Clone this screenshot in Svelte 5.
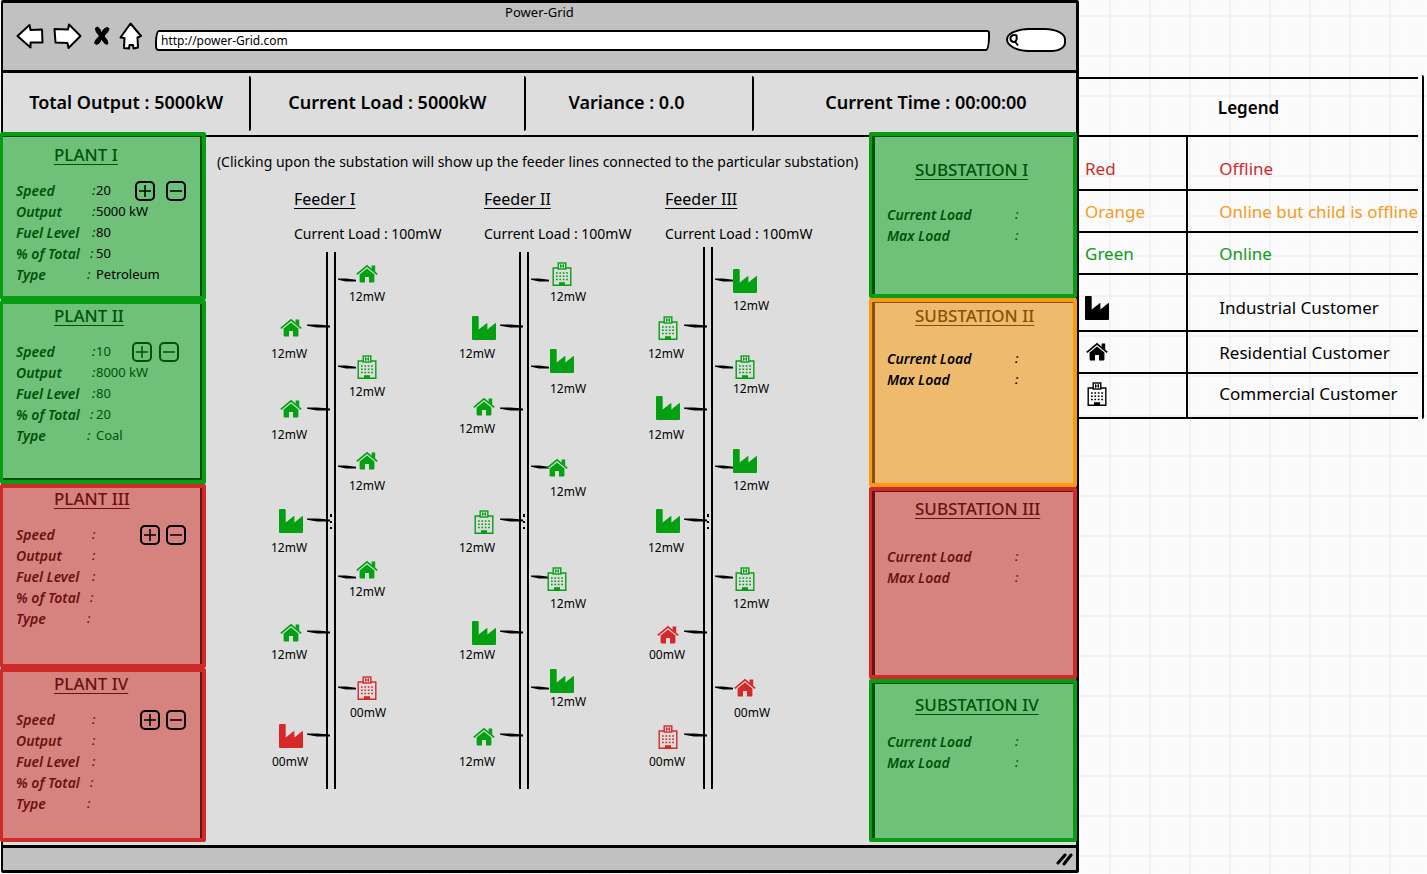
<script>
  const rows = ['Speed', 'Output', 'Fuel Level', '% of Total', 'Type'];

  const plants = [
    { numeral: 'I', state: 'online', cls: 'p1', values: ['20', '5000 kW', '80', '50', 'Petroleum'] },
    { numeral: 'II', state: 'online', cls: 'p2', values: ['10', '8000 kW', '80', '20', 'Coal'] },
    { numeral: 'III', state: 'offline', cls: 'p3', values: ['', '', '', '', ''] },
    { numeral: 'IV', state: 'offline', cls: 'p4', values: ['', '', '', '', ''] }
  ];

  const substations = [
    { numeral: 'I', state: 'online', cls: 's1' },
    { numeral: 'II', state: 'partial', cls: 's2' },
    { numeral: 'III', state: 'offline', cls: 's3' },
    { numeral: 'IV', state: 'online', cls: 's4' }
  ];

  // Node: [kind, icon x, icon y, label x, label y, offline]
  const feeders = [
    {
      numeral: 'I', rail: 64, top: 12,
      nodes: [
        ['home', 103, 34, 103, 56], ['home', 27, 88, 25, 113],
        ['office', 103, 127, 103, 151], ['home', 27, 169, 25, 194],
        ['home', 103, 221, 103, 245], ['plant', 27, 281, 25, 307],
        ['home', 103, 330, 103, 351], ['home', 27, 393, 25, 414],
        ['office', 103, 448, 104, 472, true], ['plant', 27, 496, 26, 521, true]
      ]
    },
    {
      numeral: 'II', rail: 67, top: 12,
      nodes: [
        ['office', 108, 34, 114, 56], ['plant', 30, 88, 23, 113],
        ['plant', 108, 121, 114, 148], ['home', 30, 167, 23, 188],
        ['home', 103, 228, 114, 251], ['office', 30, 282, 23, 307],
        ['office', 103, 339, 114, 363], ['plant', 30, 393, 23, 414],
        ['plant', 108, 441, 114, 461], ['home', 30, 497, 23, 521]
      ]
    },
    {
      numeral: 'III', rail: 70, top: 7,
      nodes: [
        ['plant', 110, 41, 116, 65], ['office', 33, 88, 31, 113],
        ['office', 110, 127, 116, 148], ['plant', 33, 168, 31, 194],
        ['plant', 110, 221, 116, 245], ['plant', 33, 281, 31, 307],
        ['office', 110, 339, 116, 363], ['home', 33, 395, 32, 414, true],
        ['home', 110, 448, 117, 472, true], ['office', 33, 497, 32, 521, true]
      ]
    }
  ];

  const rightTicks = [40, 127, 227, 337, 448];
  const leftTicks = [86, 169, 280, 392, 495];
</script>

{#snippet icon(kind)}
  <svg class="icon" viewBox="0 0 24 24" aria-hidden="true">
    {#if kind === 'plant'}
      <path fill="currentColor" d="M0 1Q0 0 1 0H5.7Q6.7 0 6.7 1V13.4L14.6 7.2Q15.4 6.8 15.4 7.6V13.4L23.1 7.2Q24 6.8 24 7.8V23Q24 24 23 24H1Q0 24 0 23Z" />
    {:else if kind === 'home'}
      <path fill="none" stroke="currentColor" stroke-width="1.8" d="M1.8 12.4L12 3.9L22.2 12.4" />
      <path fill="currentColor" d="M16.6 3.6H20.2V10L16.6 7Z" />
      <path fill="currentColor" d="M4.6 12.6L12 6.4L19.4 12.6V19.6Q19.4 20.6 18.4 20.6H14V15H10V20.6H5.6Q4.6 20.6 4.6 19.6Z" />
    {:else}
      <g fill="none" stroke="currentColor" stroke-width="1.4">
        <path d="M8 6H3.2V23.2H20.8V6H16" />
        <rect x="8.2" y="1" width="7.6" height="6" />
        <path d="M10.6 2.2V5.8M13.4 2.2V5.8M10.6 4H13.4" stroke-width="1.2" />
        <path d="M6 11H18M6 14.3H18M6 17.6H18" stroke-width="1.5" stroke-dasharray="1.7 1.7" />
      </g>
      <path fill="currentColor" d="M9 23.2V20.2H15V23.2Z" />
    {/if}
  </svg>
{/snippet}

<div class="page">
  <main class="window">
    <header class="chrome">
      <div class="caption">Power-Grid</div>
      <div class="toolbar">
        <button aria-label="Back">
          <svg width="28" height="26" viewBox="0 0 28 26"><path d="M1.5 13L13.5 2L14.5 7L26 6.5L26.5 19.5L14.5 19.5L14.5 24.5Z" /></svg>
        </button>
        <button aria-label="Forward">
          <svg width="30" height="28" viewBox="0 0 30 28"><path d="M28.5 14L17 2.5L16 7.5L2.5 7L3.5 20.5L15.5 21L16.5 26Z" /></svg>
        </button>
        <button aria-label="Stop" class="stop">
          <svg width="18" height="22" viewBox="0 0 18 22"><path d="M8.5 8Q10.5 3 14 2.5L16 3.5Q16 6 11 11Q15 15.5 15 18.5L13.500 19.5Q11 18.500 8.500 14Q6.5 19.500 3 19.500L1.500 18Q2 15 6.5 11Q2 6.5 2.500 3L4.500 2Q7 3 8.5 8Z" /></svg>
        </button>
        <button aria-label="Home">
          <svg width="24" height="28" viewBox="0 0 24 28"><path d="M11.5 1.5L22 14L18.5 15.5L19 25.5L14.5 26.5L14 23H10.5L10 26.5L5 26L5.5 16L1.5 15.5Z" /></svg>
        </button>
        <input class="address" type="text" aria-label="Address" value="http://power-Grid.com" />
        <label class="search">
          <svg width="12" height="14" viewBox="0 0 12 14" aria-hidden="true"><path d="M9 2.5Q4 1 2.500 4.500Q2 8.500 5.500 9Q9.500 9 8.500 2.500M7 8.500L10 12.500" /></svg>
          <input type="search" aria-label="Search" />
        </label>
      </div>
    </header>

    <section class="stats">
      <div>Total Output : 5000kW</div>
      <div>Current Load : 5000kW</div>
      <div class="left">Variance : 0.0</div>
      <div class="right">Current Time : 00:00:00</div>
    </section>

    <div class="body">
      <aside class="plants">
        {#each plants as plant}
          <section class="card {plant.state} {plant.cls}">
            <h2>PLANT {plant.numeral}</h2>
            <dl>
              {#each rows as row, i}
                <dt>{row}</dt>
                <dd>
                  <i class="r{i}">:</i><span>{plant.values[i]}</span>
                  {#if i === 0}
                    <span class="steps">
                      <button aria-label="Increase speed">
                        <svg width="20" height="20" viewBox="0 0 20 20"><rect x="1" y="1" width="18" height="18" rx="4" /><path d="M4 10H16M10 4V16" /></svg>
                      </button>
                      <button aria-label="Decrease speed">
                        <svg width="20" height="20" viewBox="0 0 20 20"><rect x="1" y="1" width="18" height="18" rx="4" /><path d="M4 10H16" /></svg>
                      </button>
                    </span>
                  {/if}
                </dd>
              {/each}
            </dl>
          </section>
        {/each}
      </aside>

      <section class="network">
        <p>(Clicking upon the substation will show up the feeder lines connected to the particular substation)</p>
        <div class="feeders">
          {#each feeders as feeder}
            <article>
              <h3>Feeder {feeder.numeral}</h3>
              <div class="load">Current Load : 100mW</div>
              <div class="diagram">
                <svg class="lines" width="190" height="560" viewBox="0 0 190 560" aria-hidden="true">
                  <path class="rail" d="M{feeder.rail - 1} {feeder.top}V549" />
                  <path class="rail" d="M{feeder.rail + 7} {feeder.top}V549" />
                  {#each rightTicks as y}
                    <path d="M{feeder.rail + 10} {y - 1.6}l8 0l10 1.4l0 1.6l-10 0l-8 -1.6z" />
                  {/each}
                  {#each leftTicks as y}
                    <path d="M{feeder.rail - 21} {y - 1.6}l10 0l13 1.2l0 1.8l-13 0l-10 -1.6z" />
                  {/each}
                  <path d="M{feeder.rail + 2} 274h2v3h-2zM{feeder.rail + 2} 281h2v2h-2zM{feeder.rail + 2} 287h2v2h-2z" />
                </svg>
                {#each feeder.nodes as [kind, x, y, lx, ly, off]}
                  <span class="node" class:off style="left:{x}px;top:{y}px">{@render icon(kind)}</span>
                  <span class="tag" style="left:{lx}px;top:{ly}px">{off ? '00mW' : '12mW'}</span>
                {/each}
              </div>
            </article>
          {/each}
        </div>
      </section>

      <aside class="substations">
        {#each substations as station}
          <section class="card {station.state} {station.cls}">
            <h2>SUBSTATION {station.numeral}</h2>
            <dl>
              <dt>Current Load</dt><dd><i>:</i></dd>
              <dt>Max Load</dt><dd><i>:</i></dd>
            </dl>
          </section>
        {/each}
      </aside>
    </div>

    <footer>
      <svg width="18" height="14" viewBox="0 0 18 14" aria-hidden="true"><path d="M2 11L9 3M8 12L15 3" /></svg>
    </footer>
  </main>

  <aside class="legend">
    <table>
      <thead><tr><th colspan="2">Legend</th></tr></thead>
      <tbody>
        <tr class="h54 red"><td>Red</td><td>Offline</td></tr>
        <tr class="h42 orange"><td>Orange</td><td>Online but child is offline</td></tr>
        <tr class="h42 green"><td>Green</td><td>Online</td></tr>
        <tr class="h57"><td>{@render icon('plant')}</td><td>Industrial Customer</td></tr>
        <tr class="h42"><td>{@render icon('home')}</td><td>Residential Customer</td></tr>
        <tr class="h45"><td>{@render icon('office')}</td><td>Commercial Customer</td></tr>
      </tbody>
    </table>
  </aside>
</div>

<style>
  :global(body) {
    background: #fbfbfb;
  }

  .page {
    display: grid;
    grid-template-columns: minmax(0, 1079fr) minmax(0, 348fr);
    min-height: 100vh;
    box-sizing: border-box;
    padding-bottom: 2px;
    font-family: 'Noto Sans', sans-serif;
    font-size: 13px;
    line-height: 21px;
    color: #000;
    background-image:
      linear-gradient(90deg, #f3f3f3 2px, transparent 2px),
      linear-gradient(#f3f3f3 2px, transparent 2px),
      linear-gradient(90deg, #f9f9f9 1px, transparent 1px),
      linear-gradient(#f9f9f9 1px, transparent 1px);
    background-size: 40px 40px, 40px 40px, 10px 10px, 10px 10px;
    background-position: 29px 15px;
  }

  button {
    padding: 0;
    border: 0;
    background: none;
    font: inherit;
    color: inherit;
    cursor: pointer;
  }

  svg {
    display: block;
  }

  .icon {
    width: 24px;
    height: 24px;
  }

  .window {
    display: flex;
    flex-direction: column;
    border: 3px solid #000;
    border-left-width: 2px;
    border-radius: 2px;
    margin-left: 1px;
    background: #ddd;
  }

  .chrome {
    background: #c1c1c1;
    border-bottom: 3px solid #000;
    height: 67px;
  }

  .caption {
    text-align: center;
    line-height: 18px;
  }

  .toolbar {
    display: flex;
    align-items: center;
    height: 30px;
    padding: 0 10px 0 13px;
  }

  .toolbar button {
    margin-right: 8px;
    fill: #fff;
    stroke: #000;
    stroke-width: 2;
    stroke-linejoin: round;
  }

  .toolbar .stop {
    fill: #000;
    stroke-width: 1;
    margin: 0 8px 0 3px;
  }

  .address {
    flex: 1;
    min-width: 0;
    height: 21px;
    box-sizing: border-box;
    margin: 8px 16px 0 4px;
    padding: 0 4px;
    border: 2px solid #000;
    border-radius: 4px 3px 4px 3px / 12px 3px 14px 5px;
    background: #fff;
    font: 12px 'Noto Sans', sans-serif;
  }

  .search {
    display: flex;
    align-items: center;
    width: 60px;
    height: 24px;
    box-sizing: border-box;
    margin-top: 8px;
    border: 2px solid #000;
    border-radius: 24px 22px 14px 24px / 12px 12px 10px 13px;
    background: #fff;
    fill: none;
    stroke: #000;
    stroke-width: 2;
  }

  .search input {
    width: 36px;
    min-width: 0;
    padding: 0;
    border: 0;
    outline: 0;
    background: none;
  }

  .stats {
    display: grid;
    grid-template-columns: 249fr 275fr 229fr 323fr;
    border-bottom: 2px solid #000;
    padding-top: 3px;
    font-size: 18px;
    font-weight: 600;
    text-align: center;
    white-space: nowrap;
  }

  .stats div {
    border-right: 2px solid #000;
    border-radius: 2px;
    padding: 16px 0 18px;
    margin-bottom: 4px;
  }

  .stats .left {
    text-align: left;
    padding-left: 43px;
  }

  .stats .right {
    border: 0;
    padding-left: 22px;
  }

  .body {
    display: grid;
    grid-template-columns: 204px minmax(0, 1fr) 208px;
    flex: 1;
  }

  .plants,
  .substations {
    display: flex;
    flex-direction: column;
    margin: -5px 1px 3px -3px;
  }

  .substations {
    margin: -5px -1px 3px 1px;
  }

  .card {
    --line: #089c14;
    --fill: #6fc079;
    --ink: #00520a;
    box-sizing: border-box;
    border: 4px solid var(--line);
    border-left-width: 3px;
    border-radius: 2px;
    background: var(--fill);
    color: var(--ink);
    padding: 5px 16px 0 13px;
    box-shadow: inset -2px 0 var(--ink);
    flex: 1 0 184px;
  }

  .card.offline {
    --line: #cf2a2a;
    --fill: #d6837f;
    --ink: #6b1110;
  }

  .card.partial {
    --line: #f59a12;
    --fill: #eebb6e;
    --ink: #8a5000;
  }

  .substations .card {
    box-shadow: inset 3px 0 var(--ink), inset 0 1px var(--ink);
    padding-left: 15px;
  }

  .card.p1 {
    flex-basis: 168px;
    padding-top: 8px;
    box-shadow: inset -2px 0 var(--ink), inset 0 1px var(--ink);
  }

  .card.p2 {
    padding-top: 1px;
    box-shadow: inset -2px 0 var(--ink), inset 0 -2px var(--ink);
  }

  .card.p3 {
    padding-top: 0;
  }

  .card.p4 {
    flex-basis: 174px;
    padding-top: 1px;
  }

  h2 {
    margin: 0 0 15px 38px;
    font-size: 17px;
    line-height: 21px;
    font-weight: 500;
    text-decoration: underline;
    text-decoration-thickness: 1px;
    text-underline-offset: 3px;
    white-space: nowrap;
  }

  dl {
    display: grid;
    grid-template-columns: 76px 1fr;
    margin: 0;
  }

  dt {
    font-size: 14px;
    font-weight: 600;
    font-style: italic;
    white-space: nowrap;
  }

  dd {
    display: flex;
    align-items: center;
    margin: 0;
    height: 21px;
  }

  dd i {
    width: 4px;
    font-weight: 500;
  }

  dd .r3 {
    margin: 0 2px 0 -2px;
  }

  dd .r4 {
    margin: 0 5px 0 -5px;
  }

  .p1 dd span {
    color: #000;
  }

  .steps {
    display: flex;
    gap: 6px;
    margin-left: auto;
    fill: none;
    stroke: currentColor;
    stroke-width: 2;
  }

  .steps path {
    stroke-width: 1.5;
  }

  .p1 .steps {
    gap: 11px;
  }

  .p2 .steps {
    gap: 7px;
    margin-right: 7px;
  }

  .offline .steps {
    color: #000;
  }

  .substations h2 {
    margin: 0 0 24px 28px;
  }

  .substations dl {
    grid-template-columns: 128px 1fr;
  }

  .card.s1 {
    flex-basis: 166px;
    padding-top: 23px;
  }

  .card.s2 {
    flex-basis: 189px;
    padding-top: 3px;
  }

  .s2 dl {
    color: #000;
  }

  .s2 h2 {
    margin-bottom: 22px;
  }

  .card.s3 {
    flex-basis: 192px;
    padding-top: 7px;
  }

  .s3 h2 {
    margin-bottom: 27px;
  }

  .card.s4 {
    flex-basis: 163px;
    padding-top: 11px;
  }

  .s4 h2 {
    margin-bottom: 16px;
  }

  .network p {
    margin: 14px 0 17px;
    font-size: 14px;
    text-align: center;
    white-space: nowrap;
  }

  .feeders {
    display: grid;
    grid-template-columns: 190px 181px 190px;
    padding-left: 57px;
  }

  h3 {
    margin: 0 0 13px 30px;
    font-size: 16px;
    font-weight: 400;
    text-decoration: underline;
    text-decoration-thickness: 1px;
    text-underline-offset: 3px;
  }

  .load {
    padding-left: 30px;
    font-size: 14px;
    white-space: nowrap;
  }

  .diagram {
    position: relative;
    height: 560px;
    margin-top: -4px;
  }

  .lines .rail {
    stroke: #000;
    stroke-width: 2;
  }

  .node,
  .tag {
    position: absolute;
    transform: translate(-50%, -50%);
  }

  .tag {
    font-size: 12px;
  }

  .node {
    color: #05a012;
  }

  .node.off {
    color: #d62828;
  }

  footer {
    display: flex;
    justify-content: flex-end;
    align-items: center;
    height: 22px;
    padding-right: 2px;
    border-top: 3px solid #000;
    background: #c1c1c1;
    fill: none;
    stroke: #000;
    stroke-width: 3;
    stroke-linecap: round;
  }

  .legend {
    align-self: start;
    margin: 75px 3px 0 0;
    padding: 2px 4px 0 0;
    border-right: 2px solid #000;
    border-radius: 2px;
  }

  table {
    width: 100%;
    border-collapse: collapse;
    font-size: 17px;
  }

  th,
  td {
    padding: 0;
    border: solid #000;
    border-width: 2px 0;
    text-align: left;
    white-space: nowrap;
  }

  th {
    height: 56px;
    font-weight: 600;
    text-align: center;
  }

  td {
    box-sizing: border-box;
  }

  td:first-child {
    width: 109px;
    padding-left: 6px;
    border-right-width: 2px;
  }

  td:last-child {
    padding-left: 31px;
  }

  .h54 td {
    height: 54px;
    padding-top: 10px;
  }

  .h42 td {
    height: 42px;
  }

  .h57 td {
    height: 57px;
    padding-top: 10px;
  }

  .h45 td {
    height: 45px;
    padding-bottom: 4px;
  }

  .red {
    color: #cf2a2a;
  }

  .orange {
    color: #f59a1c;
  }

  .green {
    color: #109a20;
  }
</style>
